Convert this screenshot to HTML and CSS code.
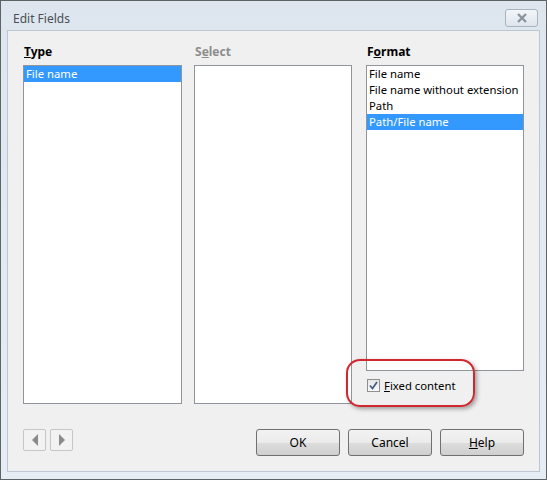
FILE: index.html
```html
<!DOCTYPE html>
<html lang="en">
<head>
    <meta charset="UTF-8">
    <title>Edit Fields</title>
    <link rel="stylesheet" href="styles.css">
</head>
<body>
    <div class="window">
        <!-- Title bar -->
        <div class="titlebar">
            <span class="title">Edit Fields</span>
            <span class="close-btn">
                <svg width="14" height="10" viewBox="0 0 14 10">
                    <path d="M3 1 L11 9 M11 1 L3 9" stroke="#8b949c" stroke-width="2.4" fill="none"/>
                </svg>
            </span>
        </div>

        <!-- Client area -->
        <div class="client">
            <div class="columns">
                <div class="column col-type">
                    <div class="label"><u>T</u>ype</div>
                    <div class="listbox">
                        <div class="row selected">File name</div>
                    </div>
                </div>
                <div class="column col-select">
                    <div class="label disabled">S<u>e</u>lect</div>
                    <div class="listbox"></div>
                </div>
                <div class="column col-format">
                    <div class="label">F<u>o</u>rmat</div>
                    <div class="listbox short">
                        <div class="row">File name</div>
                        <div class="row">File name without extension</div>
                        <div class="row">Path</div>
                        <div class="row selected">Path/File name</div>
                    </div>
                    <div class="check-row">
                        <span class="checkbox">
                            <svg width="9" height="9" viewBox="0 0 9 9">
                                <path d="M1 4.5 L3.5 7.5 L8 1" stroke="#4a5f87" stroke-width="1.8" fill="none"/>
                            </svg>
                        </span>
                        <span><u>F</u>ixed content</span>
                    </div>
                </div>
            </div>

            <div class="bottom">
                <div class="nav">
                    <span class="nav-btn"><span class="arrow-left"></span></span>
                    <span class="nav-btn"><span class="arrow-right"></span></span>
                </div>
                <div class="buttons">
                    <button>OK</button>
                    <button>Cancel</button>
                    <button><u>H</u>elp</button>
                </div>
            </div>

            <!-- red highlight drawn over the screenshot -->
            <div class="highlight"></div>
        </div>
    </div>
</body>
</html>
```

FILE: styles.css
```css
* {
    margin: 0;
    padding: 0;
    box-sizing: border-box;
}

body {
    font-family: 'Noto Sans', 'Open Sans', sans-serif;
    font-size: 11.3px;
    color: #000;
    background: #fff;
}

/* Window frame */
.window {
    width: 547px;
    height: 480px;
    border: 1px solid #5e6366;
    background: linear-gradient(#dde6ef, #e6edf4);
    display: flex;
    flex-direction: column;
}

.titlebar {
    height: 31px;
    display: flex;
    align-items: center;
    justify-content: space-between;
    padding: 0 8px 0 12px;
}

.title {
    color: #4a4f55;
    font-size: 12px;
    margin-top: 5px;
}

.close-btn {
    width: 33px;
    height: 18px;
    border: 1px solid #a9b3bd;
    border-radius: 3px;
    background: linear-gradient(#f3f6f9, #dfe5ec);
    display: flex;
    align-items: center;
    justify-content: center;
    margin-top: 5px;
}

.client {
    position: relative;
    flex: 1;
    margin: 0 6px 7px 6px;
    border: 1px solid #bcc7d2;
    background: #f0f0f0;
    padding: 13px 15px 15px 15px;
    display: flex;
    flex-direction: column;
}

/* Three columns */
.columns {
    display: flex;
    height: 360px;
}

.column {
    display: flex;
    flex-direction: column;
}

.col-type {
    width: 159px;
    margin-right: 12px;
}

.col-select {
    width: 158px;
    margin-right: 14px;
}

.col-format {
    width: 158px;
}

.label {
    font-weight: bold;
    font-size: 12px;
    line-height: 16px;
    margin-bottom: 5px;
    padding-left: 1px;
}

.label.disabled {
    color: #8d8d8d;
}

.listbox {
    flex: 1;
    background: #fff;
    border: 1px solid #8f959b;
}

.listbox.short {
    flex: none;
    height: 306px;
}

.row {
    height: 16px;
    line-height: 16px;
    padding-left: 2px;
    white-space: nowrap;
}

.row.selected {
    background: #3399ff;
    color: #fff;
}

.check-row {
    display: flex;
    align-items: center;
    gap: 4px;
    margin-top: 7px;
    padding-left: 1px;
}

.checkbox {
    width: 13px;
    height: 13px;
    border: 1px solid #8e8f8f;
    background: linear-gradient(#e6e6e6, #fafafa);
    display: flex;
    align-items: center;
    justify-content: center;
}

/* Bottom row */
.bottom {
    display: flex;
    justify-content: space-between;
    align-items: flex-start;
    margin-top: 25px;
}

.nav {
    display: flex;
    gap: 4px;
}

.nav-btn {
    width: 23px;
    height: 22px;
    border: 1px solid #c6c6c6;
    border-radius: 2px;
    background: #f2f2f2;
    display: flex;
    align-items: center;
    justify-content: center;
}

.arrow-left {
    border-top: 6px solid transparent;
    border-bottom: 6px solid transparent;
    border-right: 6px solid #8a8a8a;
}

.arrow-right {
    border-top: 6px solid transparent;
    border-bottom: 6px solid transparent;
    border-left: 6px solid #8a8a8a;
}

.buttons {
    display: flex;
    gap: 8px;
}

button {
    width: 84px;
    height: 27px;
    font-family: inherit;
    font-size: 12px;
    color: #000;
    border: 1px solid #707070;
    border-radius: 3px;
    background: linear-gradient(#f2f2f2 0%, #ebebeb 50%, #dddddd 51%, #cfcfcf 100%);
}

/* Red annotation ring */
.highlight {
    position: absolute;
    left: 338px;
    top: 328px;
    width: 129px;
    height: 48px;
    border: 2px solid #d0282e;
    border-radius: 14px;
    box-shadow: 2px 2px 4px rgba(0, 0, 0, 0.35);
}
```
